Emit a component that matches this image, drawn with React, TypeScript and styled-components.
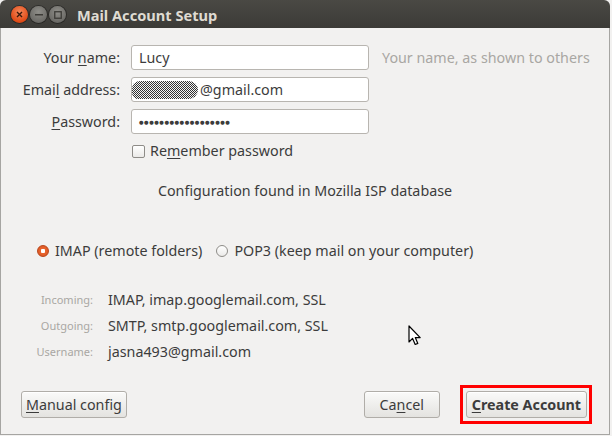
import React from "react";
import styled, { createGlobalStyle } from "styled-components";

const Global = createGlobalStyle`
  html, body { margin: 0; padding: 0; background: #f2f1f0; }
  body { font-family: "Noto Sans", "DejaVu Sans", sans-serif; }
  * { box-sizing: border-box; }
`;

const Window = styled.div`
  position: relative;
  width: 610px;
  height: 435px;
  display: flex;
  flex-direction: column;
`;

const TitleBar = styled.div`
  height: 28px;
  flex: none;
  background: linear-gradient(#4a4944, #3c3b37);
  border-radius: 6px 6px 0 0;
  display: flex;
  align-items: center;
  padding-left: 11px;
  padding-top: 1px;
`;

const WinButtons = styled.div`
  display: flex;
  gap: 2px;
  margin-right: 11px;
`;

const WinBtn = styled.div<{ $close?: boolean }>`
  width: 17px;
  height: 17px;
  border-radius: 50%;
  display: flex;
  align-items: center;
  justify-content: center;
  background: ${(p) =>
    p.$close
      ? "radial-gradient(circle at 50% 35%, #f5875a, #df4a16 70%, #c23c0e)"
      : "radial-gradient(circle at 50% 35%, #8f8e89, #6c6b67 70%, #5a5955)"};
  box-shadow: 0 0 0 1px rgba(0, 0, 0, 0.35);
`;

const Title = styled.div`
  color: #dfdbd2;
  font-weight: bold;
  font-size: 14.6px;
`;

const Body = styled.div`
  flex: 1;
  background: #f2f1f0;
  border-left: 1px solid #a6a5a2;
  border-right: 1px solid #a6a5a2;
  border-bottom: 1px solid #a6a5a2;
  display: flex;
  flex-direction: column;
  padding-top: 17px;
  padding-bottom: 10px;
  color: #3c3c3c;
  font-size: 14.3px;
`;

const FormGrid = styled.div`
  display: grid;
  grid-template-columns: 119px 238px auto;
  column-gap: 11px;
  row-gap: 7px;
  align-items: center;
`;

const Label = styled.label`
  text-align: right;
  color: #3c3c3c;
  line-height: 18px;
`;

const Mn = styled.span`
  text-decoration: underline;
  text-underline-offset: 2px;
`;

const Input = styled.div`
  height: 25px;
  background: #fff;
  border: 1px solid #b8b5b0;
  border-radius: 3px;
  display: flex;
  align-items: center;
  padding-left: 7px;
  color: #3c3c3c;
  overflow: hidden;
  white-space: nowrap;
`;

const Hint = styled.div`
  color: #a9a7a3;
  margin-left: 2px;
  white-space: nowrap;
`;

const Blob = styled.span`
  display: inline-block;
  width: 66px;
  height: 18px;
  margin-left: -7px;
  margin-right: 2px;
  border-radius: 9px 10px 10px 7px;
  background-color: #999;
  background-image: repeating-conic-gradient(#333 0 25%, #f4f4f4 0 50%);
  background-size: 2px 2px;
`;

const Dots = styled.span`
  font-size: 5.2px;
  letter-spacing: 0.55px;
  color: #3c3c3c;
`;

const CheckRow = styled.div`
  display: flex;
  align-items: center;
  gap: 5px;
  margin-top: 8px;
  padding-left: 131px;
  line-height: 18px;
`;

const CheckBox = styled.span`
  width: 13px;
  height: 13px;
  border: 1px solid #8e8c88;
  border-radius: 2px;
  background: linear-gradient(#fff, #ebeae8);
`;

const Config = styled.div`
  text-align: center;
  margin-top: 22px;
  line-height: 18px;
`;

const RadioRow = styled.div`
  display: flex;
  align-items: center;
  margin-top: 42px;
  padding-left: 36px;
  line-height: 18px;
`;

const RadioItem = styled.div`
  display: flex;
  align-items: center;
  gap: 6px;
  margin-right: 14px;
`;

const Radio = styled.span<{ $on?: boolean }>`
  width: 12px;
  height: 12px;
  border-radius: 50%;
  border: 1px solid ${(p) => (p.$on ? "#b8461c" : "#8e8c88")};
  background: ${(p) =>
    p.$on
      ? "radial-gradient(circle, #fff 0 2px, #e8652f 2.5px, #d9501c)"
      : "linear-gradient(#fff, #ebeae8)"};
`;

const InfoGrid = styled.div`
  display: grid;
  grid-template-columns: 92px auto;
  column-gap: 15px;
  row-gap: 8px;
  margin-top: 31px;
  align-items: center;
  line-height: 18px;
`;

const InfoLabel = styled.div`
  text-align: right;
  color: #a9a7a3;
  font-size: 11px;
`;

const ButtonBar = styled.div`
  margin-top: auto;
  display: flex;
  align-items: center;
  padding-left: 20px;
  padding-right: 17px;
`;

const Button = styled.button<{ $bold?: boolean; $w?: number }>`
  height: 27px;
  padding: 0 ${(p) => (p.$bold ? 5 : 4)}px;
  ${(p) => (p.$w ? `width: ${p.$w}px;` : "")}
  font-family: inherit;
  font-size: 14.3px;
  font-weight: ${(p) => (p.$bold ? "bold" : "normal")};
  color: #3c3c3c;
  border: 1px solid #b0ada8;
  border-radius: 3px;
  background: linear-gradient(#fafaf9, #e4e3e0);
  box-shadow: inset 0 1px 0 #fff;
`;

const Spacer = styled.div`
  flex: 1;
`;

const RedFrame = styled.div`
  margin-left: 20px;
  border: 3px solid #ff0000;
  padding: 3px 2px 3px 3px;
  display: flex;
`;

const Cursor = styled.svg`
  position: absolute;
  left: 408px;
  top: 325px;
`;

export default function App() {
  return (
    <>
      <Global />
      <Window>
        <TitleBar>
          <WinButtons>
            <WinBtn $close>
              <svg width="7" height="7" viewBox="0 0 7 7">
                <path d="M1 1L6 6M6 1L1 6" stroke="#3a1a0c" strokeWidth="1.4" />
              </svg>
            </WinBtn>
            <WinBtn>
              <svg width="8" height="2" viewBox="0 0 8 2">
                <rect width="8" height="1.5" fill="#3c3b37" />
              </svg>
            </WinBtn>
            <WinBtn>
              <svg width="8" height="8" viewBox="0 0 8 8">
                <rect x="0.75" y="0.75" width="6.5" height="6.5" fill="none" stroke="#3c3b37" strokeWidth="1.3" />
              </svg>
            </WinBtn>
          </WinButtons>
          <Title>Mail Account Setup</Title>
        </TitleBar>
        <Body>
          <FormGrid>
            <Label>
              Your <Mn>n</Mn>ame:
            </Label>
            <Input>Lucy</Input>
            <Hint>Your name, as shown to others</Hint>
            <Label>
              Emai<Mn>l</Mn> address:
            </Label>
            <Input>
              <Blob />
              @gmail.com
            </Input>
            <span />
            <Label>
              <Mn>P</Mn>assword:
            </Label>
            <Input>
              <Dots>●●●●●●●●●●●●●●●●●●</Dots>
            </Input>
            <span />
          </FormGrid>
          <CheckRow>
            <CheckBox />
            <span>
              Re<Mn>m</Mn>ember password
            </span>
          </CheckRow>
          <Config>Configuration found in Mozilla ISP database</Config>
          <RadioRow>
            <RadioItem>
              <Radio $on />
              <span>IMAP (remote folders)</span>
            </RadioItem>
            <RadioItem>
              <Radio />
              <span>POP3 (keep mail on your computer)</span>
            </RadioItem>
          </RadioRow>
          <InfoGrid>
            <InfoLabel>Incoming:</InfoLabel>
            <div>IMAP, imap.googlemail.com, SSL</div>
            <InfoLabel>Outgoing:</InfoLabel>
            <div>SMTP, smtp.googlemail.com, SSL</div>
            <InfoLabel>Username:</InfoLabel>
            <div>jasna493@gmail.com</div>
          </InfoGrid>
          <ButtonBar>
            <Button>
              <Mn>M</Mn>anual config
            </Button>
            <Spacer />
            <Button $w={76}>
              Ca<Mn>n</Mn>cel
            </Button>
            <RedFrame>
              <Button $bold>
                <Mn>C</Mn>reate Account
              </Button>
            </RedFrame>
          </ButtonBar>
        </Body>
        <Cursor width="13" height="21" viewBox="0 0 13 21">
          <path d="M1 1 L1 17 L4.6 13.4 L7.2 19.5 L9.8 18.4 L7.3 12.6 L12.2 12.6 Z" fill="#fff" stroke="#000" strokeWidth="1.2" strokeLinejoin="round" />
        </Cursor>
      </Window>
    </>
  );
}
